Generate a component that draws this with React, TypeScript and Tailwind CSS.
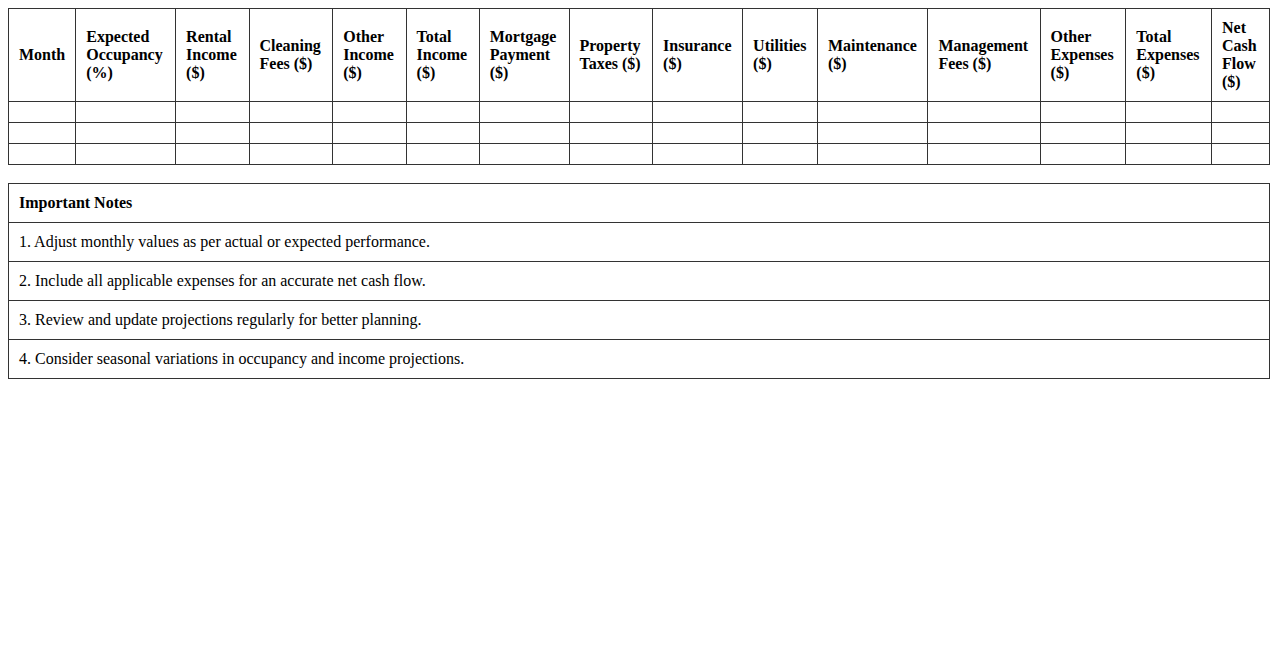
const columns = [
  "Month",
  "Expected Occupancy (%)",
  "Rental Income ($)",
  "Cleaning Fees ($)",
  "Other Income ($)",
  "Total Income ($)",
  "Mortgage Payment ($)",
  "Property Taxes ($)",
  "Insurance ($)",
  "Utilities ($)",
  "Maintenance ($)",
  "Management Fees ($)",
  "Other Expenses ($)",
  "Total Expenses ($)",
  "Net Cash Flow ($)",
];

const notes = [
  "1. Adjust monthly values as per actual or expected performance.",
  "2. Include all applicable expenses for an accurate net cash flow.",
  "3. Review and update projections regularly for better planning.",
  "4. Consider seasonal variations in occupancy and income projections.",
];

export default function App() {
  return (
    <div
      className="p-2 text-[16px] leading-[18px] text-black bg-white min-h-screen"
      style={{ fontFamily: '"Liberation Serif", "Times New Roman", serif' }}
    >
      <table className="w-full border-collapse">
        <thead>
          <tr>
            {columns.map((c) => (
              <th
                key={c}
                className="border border-[#333] p-[10px] text-left align-middle font-bold"
              >
                {c}
              </th>
            ))}
          </tr>
        </thead>
        <tbody>
          {[0, 1, 2].map((r) => (
            <tr key={r}>
              {columns.map((c) => (
                <td key={c} className="border border-[#333] p-[10px]"></td>
              ))}
            </tr>
          ))}
        </tbody>
      </table>

      <table className="w-full border-collapse mt-[18px]">
        <thead>
          <tr>
            <th className="border border-[#333] p-[10px] text-left font-bold">
              Important Notes
            </th>
          </tr>
        </thead>
        <tbody>
          {notes.map((n) => (
            <tr key={n}>
              <td className="border border-[#333] p-[10px]">{n}</td>
            </tr>
          ))}
        </tbody>
      </table>
    </div>
  );
}
